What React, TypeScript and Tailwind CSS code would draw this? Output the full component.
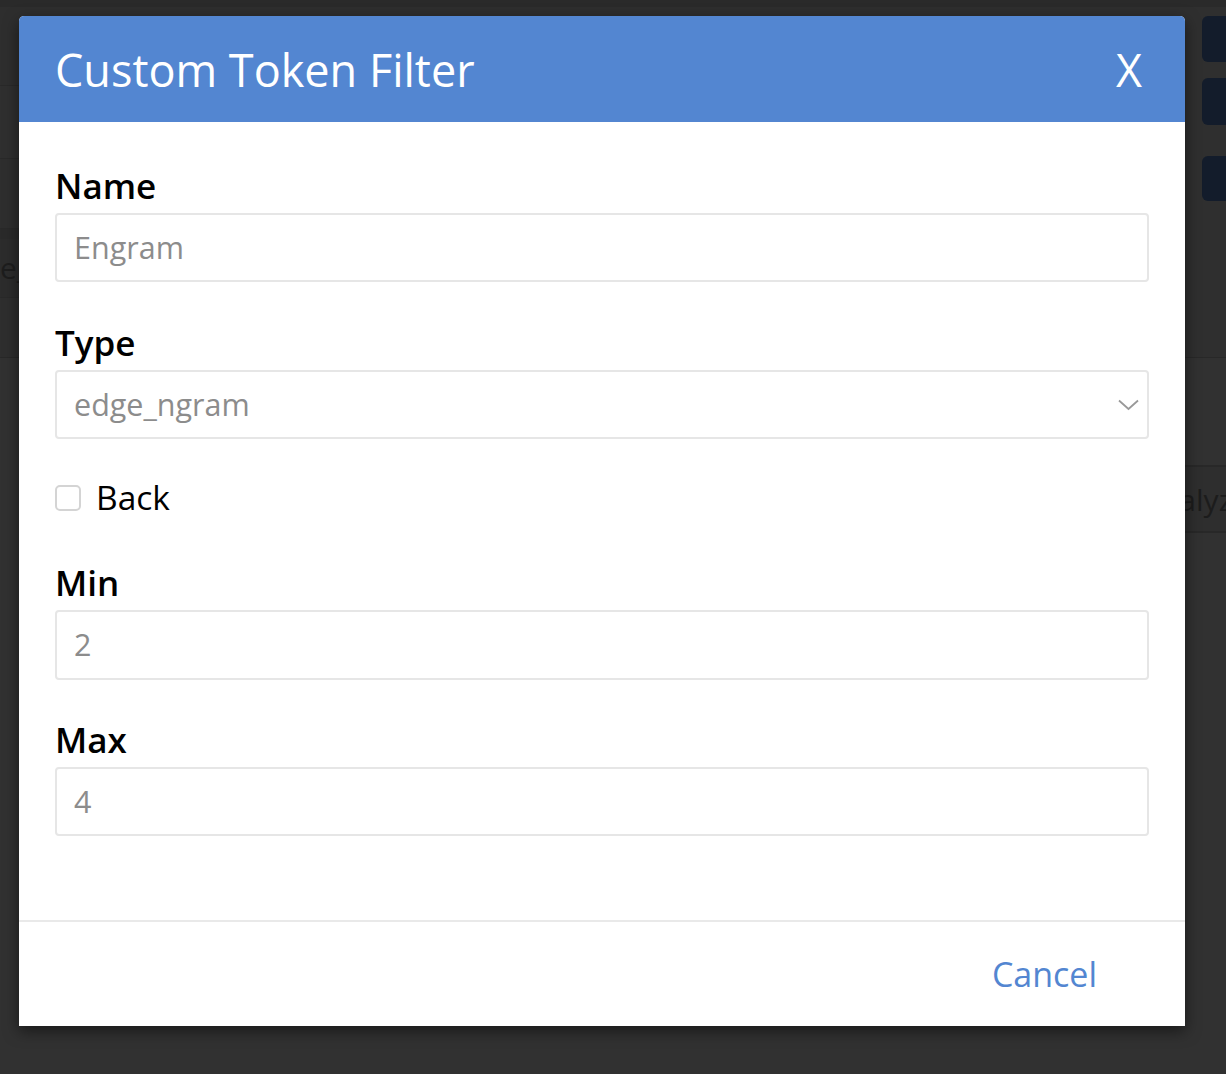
export default function App() {
  const label = "text-[35px] leading-[46px] font-semibold text-black";
  const input =
    "mt-[4px] flex items-center border-2 border-[#e6e6e6] rounded-[4px] pl-[17px] text-[30.5px] text-[#8c8c8c]";
  return (
    <div className="relative w-[1226px] h-[1074px] overflow-hidden bg-[#313131] font-['Open_Sans',sans-serif]">
      {/* dimmed page behind */}
      <div className="flex flex-col h-full">
        <div className="h-[7px] bg-[#2a2a2a]" />
        <div className="flex h-[351px] border-b border-[#282828] bg-[#2f2f2f]">
          <div className="w-[1170px] flex flex-col">
            <div className="h-[79px] border-b border-[#292929] bg-[#2e2e2e]" />
            <div className="h-[73px] border-b border-[#292929] bg-[#2f2f2f]" />
            <div className="h-[70px] border-b border-[#292929] bg-[#2e2e2e]" />
            <div className="h-[69px] border-b border-t-[10px] border-[#292929] border-t-[#2a2a2a] bg-[#2c2c2c] flex items-center overflow-hidden">
              <span className="text-[30px] text-[#1d1d1d] leading-none">e_</span>
            </div>
            <div className="flex-1 bg-[#2e2e2e]" />
          </div>
          <div className="flex-1" />
          <div className="w-[24px] flex flex-col pt-[9px]">
            <div className="h-[46px] rounded-l-[6px] bg-[#131c2b]" />
            <div className="mt-[16px] h-[47px] rounded-l-[6px] bg-[#131c2b]" />
            <div className="mt-[31px] h-[45px] rounded-l-[6px] bg-[#131c2b]" />
          </div>
        </div>
        <div className="flex-1 pt-[107px] bg-[#313131]">
          <div className="ml-auto w-[106px] h-[68px] border-y-2 border-[#282828] bg-[#2e2e2e] flex items-center overflow-hidden">
            <span className="pl-[22px] whitespace-nowrap text-[30px] text-[#1c1c1c]">Analyze</span>
          </div>
        </div>
      </div>

      {/* modal */}
      <div className="absolute left-[19px] top-[16px] w-[1166px] h-[1010px] bg-white rounded-t-[5px] shadow-[0_5px_15px_rgba(0,0,0,0.5)] flex flex-col">
        <div className="h-[106px] shrink-0 bg-[#5386d1] rounded-t-[5px] flex items-center justify-between pl-[36px] pr-[43px]">
          <span className="text-[45px] leading-[61px] font-medium text-white">Custom Token Filter</span>
          <span className="text-[45px] leading-[61px] text-white">X</span>
        </div>

        <div className="h-[798px] shrink-0 px-[36px] pt-[41px] flex flex-col">
          <div className={label}>Name</div>
          <div className={input + " h-[69px]"}>Engram</div>

          <div className={label + " mt-[38px]"}>Type</div>
          <div className={input + " h-[69px] justify-between pr-[8px]"}>
            <span>edge_ngram</span>
            <svg width="21" height="12" viewBox="0 0 21 12" fill="none">
              <path d="M1 1.5L10.5 10L20 1.5" stroke="#999999" strokeWidth="1.8" />
            </svg>
          </div>

          <div className="mt-[36px] h-[45px] flex items-center">
            <div className="w-[26px] h-[26px] border-2 border-[#d4d4d4] rounded-[5px] bg-white" />
            <span className="ml-[15px] text-[33.5px] leading-[45px] text-black">Back</span>
          </div>

          <div className={label + " mt-[40px]"}>Min</div>
          <div className={input + " h-[70px]"}>2</div>

          <div className={label + " mt-[37px]"}>Max</div>
          <div className={input + " h-[69px]"}>4</div>
        </div>

        <div className="flex-1 border-t-2 border-[#e9e9e9] flex items-center justify-end pr-[88px]">
          <span className="text-[34px] leading-[45px] text-[#5386d1]">Cancel</span>
        </div>
      </div>
    </div>
  );
}
